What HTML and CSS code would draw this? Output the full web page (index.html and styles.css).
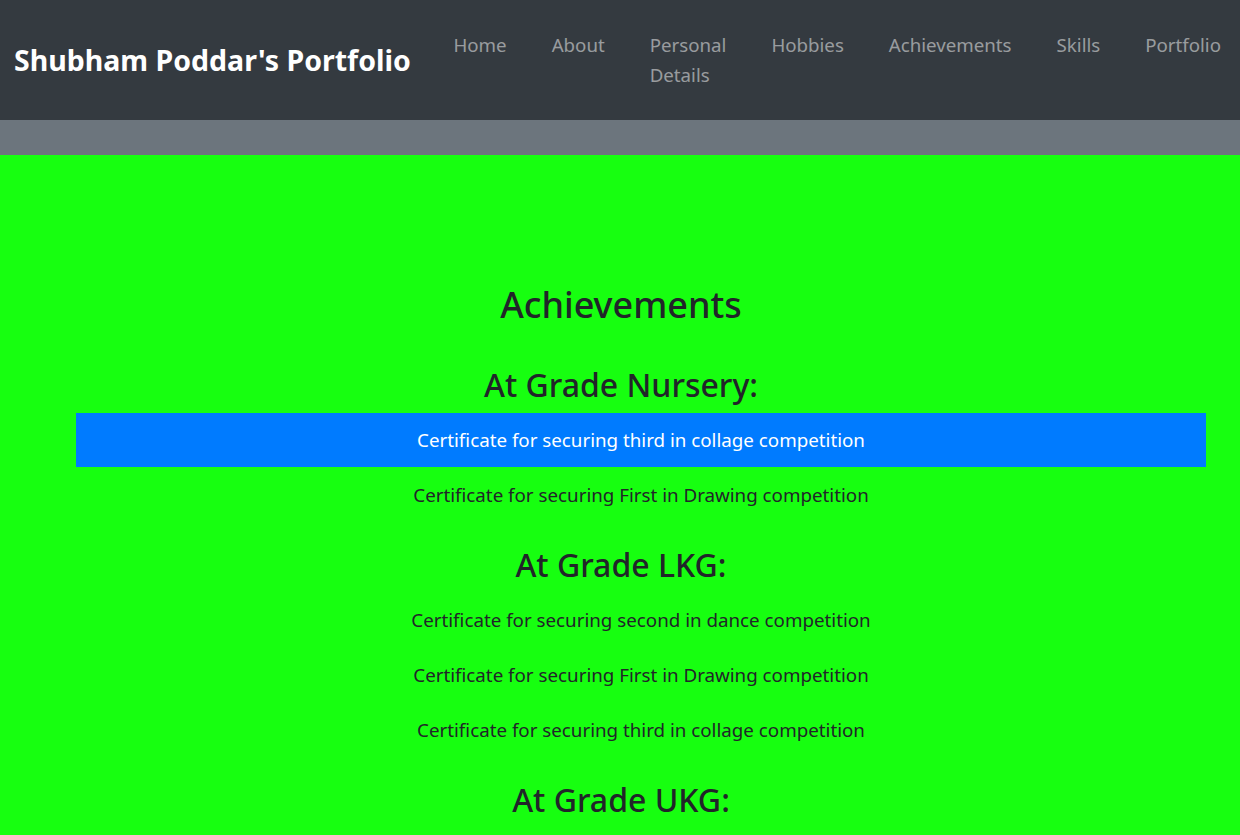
FILE: index.html
```html
<!DOCTYPE html>
<html lang="en">
<head>
<meta charset="utf-8">
<title>Shubham Poddar's Portfolio</title>
<link rel="stylesheet" href="styles.css">
</head>
<body>
<nav class="navbar">
  <a class="brand" href="#">Shubham Poddar's Portfolio</a>
  <ul class="nav">
    <li><a class="nav-link" href="#">Home</a></li>
    <li><a class="nav-link" href="#">About</a></li>
    <li class="narrow"><a class="nav-link" href="#">Personal Details</a></li>
    <li><a class="nav-link" href="#">Hobbies</a></li>
    <li><a class="nav-link" href="#">Achievements</a></li>
    <li><a class="nav-link" href="#">Skills</a></li>
    <li><a class="nav-link" href="#">Portfolio</a></li>
  </ul>
</nav>
<div class="strip"></div>
<main class="achievements">
  <h1 class="title">Achievements</h1>
  <h2 class="grade">At Grade Nursery:</h2>
  <ul class="list">
    <li class="item active">Certificate for securing third in collage competition</li>
    <li class="item">Certificate for securing First in Drawing competition</li>
  </ul>
  <h2 class="grade">At Grade LKG:</h2>
  <ul class="list">
    <li class="item">Certificate for securing second in dance competition</li>
    <li class="item">Certificate for securing First in Drawing competition</li>
    <li class="item">Certificate for securing third in collage competition</li>
  </ul>
  <h2 class="grade">At Grade UKG:</h2>
  <ul class="list">
    <li class="item">Certificate for securing First in Drawing competition</li>
    <li class="item">Certificate for securing third in collage competition</li>
  </ul>
</main>
</body>
</html>
```
FILE: styles.css
```css
* { box-sizing: border-box; }
html, body { margin: 0; padding: 0; }
body {
  font-family: "Noto Sans", "Open Sans", "DejaVu Sans", sans-serif;
  color: #212529;
  background: #17ff10;
  overflow: hidden;
}
.navbar {
  display: flex;
  align-items: center;
  justify-content: space-between;
  height: 120px;
  padding: 0 19px 0 14px;
  background: #343a40;
}
.brand {
  color: #fff;
  font-weight: 700;
  font-size: 28.5px;
  text-decoration: none;
  white-space: nowrap;
}
.nav {
  display: flex;
  gap: 45px;
  margin: 0;
  padding: 0;
  list-style: none;
}
.nav-link {
  display: block;
  color: rgba(255, 255, 255, 0.5);
  font-size: 18.7px;
  line-height: 30px;
  text-decoration: none;
  white-space: nowrap;
}
.narrow .nav-link { white-space: normal; width: min-content; }
.strip {
  height: 35px;
  background: #6c757d;
}
.achievements {
  padding: 126px 34px 0 36px;
  text-align: center;
}
.title {
  margin: 0 0 37px;
  font-size: 36px;
  font-weight: 500;
  line-height: 48px;
}
.grade {
  margin: 0 0 9px;
  font-size: 32px;
  font-weight: 500;
  line-height: 38px;
}
.list {
  margin: 0 0 24px;
  padding-left: 40px;
  list-style: none;
}
.item {
  padding: 12px 20px;
  font-size: 18.75px;
  line-height: 30px;
  margin-bottom: 1px;
}
.item.active {
  background: #007bff;
  color: #fff;
}
```
